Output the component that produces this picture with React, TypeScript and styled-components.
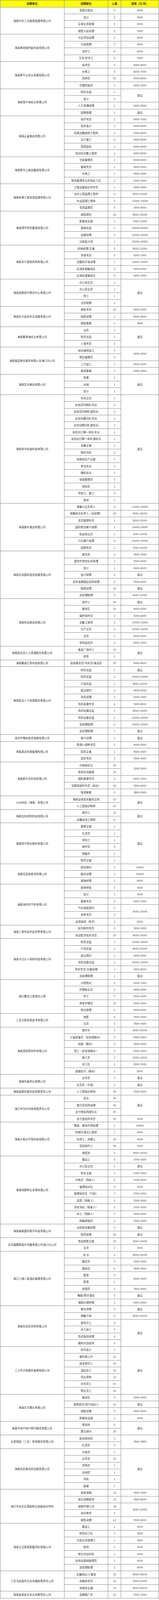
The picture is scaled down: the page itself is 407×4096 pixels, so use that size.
import styled, { createGlobalStyle } from 'styled-components';

type Job = [string, string, string?];

interface Company {
  name: string;
  jobs: Job[];
}

// 薪资为 undefined 表示与上一行合并
const DATA: Company[] = [
  { name: '海南中科三合能源发展有限公司', jobs: [['安装与售后', '3', '6000'], ['会计', '2', '4500'], ['区域业务助理', '5', '5000'], ['销售大区经理', '2', '7000']] },
  { name: '海南希铂瑞热能科技有限公司', jobs: [['大区项目经理', '2', '8000'], ['行政助理', '2', '6000'], ['司炉工', '6', '6000'], ['叉车/铲车工', '5', '5500']] },
  { name: '海南罗牛山农业发展有限公司', jobs: [['技术员', '5', '6000-8500'], ['水电工', '3', '6000-7000'], ['饲养员', '10', '5000-6000'], ['外围防疫员', '1', '4200-5200']] },
  { name: '海南惠中海实业有限公司', jobs: [['财务总监', '1', '面议'], ['会计', '1'], ['人力资源经理', '1', '5000-8000'], ['招聘助理', '1', '面议']] },
  { name: '海南云鲨食品有限公司', jobs: [['安环专员', '1', '4000-7000'], ['成本会计', '1', '4000-8000'], ['机械设备维修工程师', '1', '5000-8000'], ['生产普工', '5', '3000-8000'], ['现场品控', '1', '4000-8000'], ['自动化设备工程师', '1', '5000-8000']] },
  { name: '海南罗牛山食品集团有限公司', jobs: [['仓库管理员', '2', '4000-6000'], ['客服专员', '1', '4000-5500'], ['水电工', '1', '4500-5500'], ['物流管理专业在校实习生', '2', '3000-5000']] },
  { name: '海南睿德工程咨询监理有限公司', jobs: [['工程运营部业务专员', '1', '3000-4000'], ['水利工程监理工程师', '3', '8000-10000'], ['水运监理工程师', '3', '12000-13000'], ['现场监理员', '3', '3000-4000']] },
  { name: '海南博宇财务集团有限公司', jobs: [['销售顾问', '10', '8000-15000'], ['新媒体文案', '1', '7000-10000'], ['营销总监', '1', '20000-40000'], ['运营经理', '1', '10000-15000'], ['注册会计师', '1', '20000-30000']] },
  { name: '海南苏宁易购商贸有限公司', jobs: [['采销经理/主管', '3', '8000-12000'], ['采销专员', '3', '5000-7000'], ['加盟商开发经理', '1', '12000-15000'], ['区域采销管培生', '5', '5000-6000'], ['区域运营管培生', '5', '5000-7000']] },
  { name: '海南金畅现代物流中心有限公司', jobs: [['办公室文员', '1', '面议'], ['办公室主任', '1'], ['电工', '1'], ['法务助理', '1']] },
  { name: '海南东方金农农业发展有限公司', jobs: [['销售专员', '10', '4000-5500'], ['销售经理', '1', '6500-8500'], ['销售客服', '1', '3600']] },
  { name: '海南甄琪海实业有限公司', jobs: [['法务', '1', '面议'], ['财务总监', '1'], ['人事专员', '1']] },
  { name: '海南骏高物业服务有限公司海口分公司', jobs: [['综合维修技工', '3', '3000-4000'], ['物业管理员', '2'], ['三行技工', '1', '3000-5000'], ['案场客服', '1', '3000-4000']] },
  { name: '海南豆冰食品有限公司', jobs: [['库管', '1', '面议'], ['出纳', '1'], ['会计', '1']] },
  {
    name: '海南祥沣包装科技有限公司',
    jobs: [
      ['车间主任', '1', '面议'], ['全自动印刷机 机长', '2'], ['全自动印刷机 副机长', '2'], ['全自动模切机 机长', '1'],
      ['全自动模切机 副机长', '1'], ['全自动订糊一体机 机长', '1'], ['全自动订糊一体机 副机长', '1'], ['设备主管', '1'],
      ['抱车司机', '2'], ['纸板线生产主管', '1'], ['单瓦机长', '2'], ['糊机机长', '1'], ['纸板跟单员', '2'],
      ['质检员', '2'], ['学徒工、普工', '5'], ['厨师', '1'],
    ],
  },
  { name: '海南顺丰速运有限公司', jobs: [['储备片区负责人', '6', '12000-25000'], ['储备网点负责人（店经理）', '20', '9000-16000'], ['关务管理专员', '1', '8000-12000'], ['国际物流客户经理', '1', '10000-20000'], ['陆运收派员', '1', '7000-10000'], ['行业客户经理', '3', '10000-20000'], ['招聘专员', '1', '7000-10000']] },
  { name: '海南天创国际投资发展有限公司', jobs: [['报关员', '2', '3500-7000'], ['国内外物流业务经理', '2', '3000-6000'], ['会计', '1', '4000-6500'], ['会计助理', '2', '面议'], ['会务会展园区招商经理', '5', '3000-6000'], ['销售经理', '10', '面议'], ['总经理助理', '2', '6000-10000']] },
  { name: '海南菲诺食品有限公司', jobs: [['操作工', '45', '面议'], ['管培生', '20', '4000-6000'], ['锅炉操作员', '2', '5000-6000'], ['设备工程师', '2', '10000-12000'], ['生产主任', '2', '10000-12000'], ['文员', '1', '4000-5000'], ['现场品控员', '2', '6000-7000']] },
  { name: '海南职无双人力资源股份有限公司', jobs: [['食品厂操作工', '15', '面议'], ['财务', '1']] },
  { name: '海南鹏诚万李科技有限公司', jobs: [['高铁乘务员/列车员/客运员', '20', '4000-8000']] },
  { name: '海南智洁人力资源股份有限公司', jobs: [['财务总监', '1', '面议'], ['财务总监', '1', '10000-12000'], ['产品总监', '1', '8000-12000'], ['就业顾问', '2', '4000-6000'], ['商务经理', '1', '5000-7000'], ['商务拓展专员', '6', '3000-8000'], ['商务拓展总监', '1', '8000-12000'], ['商务运营总监', '1', '10000-12000'], ['总经理助理', '2', '10000-15000'], ['总经理助理', '1', '面议']] },
  { name: '深圳市橙信投资发展有限公司', jobs: [['客户经理', '1', '面议']] },
  { name: '海南泰龙商城管理有限公司', jobs: [['泰语小语种专员', '1', '4000-4500'], ['招商主管', '1', '4500-5500'], ['招商专员', '2', '3500-4000']] },
  { name: '海南新中北科技有限公司', jobs: [['AI审核标注', '30', '3200-5000'], ['电商在线客服', '20'], ['国际客服专员', '5', '5000-7000'], ['互联网接听专员（综合）', '20', '3500-6000'], ['粤语客服', '5', '3800-5000']] },
  { name: '九州科技（海南）有限公司', jobs: [['海南话语音采集标注师', '10', '面议'], ['人工智能训练师', '10']] },
  { name: '海南住科绿材科技有限公司', jobs: [['操作工', '10', '面议'], ['设备技术工程师', '4']] },
  { name: '海南现代物业服务有限公司', jobs: [['客服主管', '1', '面议'], ['礼宾员', '1'], ['绿化工', '1'], ['维护员', '3'], ['物管员', '1'], ['秩序主管', '1']] },
  { name: '海南百富缘投资有限公司', jobs: [['财务顾问', '2', '10000'], ['副总经理', '1', '20000'], ['营销经理', '2', '8000']] },
  { name: '海南深标特汽车有限公司', jobs: [['钣喷学徒', '2', '3000'], ['会计', '1', '4500'], ['客服专员', '2', '4000-7000'], ['汽车销售顾问', '2', '4000-15000'], ['续保专员', '2'], ['油漆技师（熟手）', '2', '6000']] },
  { name: '海南三恩伴高科技商贸有限公司', jobs: [['标书制作专员', '2', '3000-5000'], ['自动售货机补货员', '10', '8000-10000']] },
  { name: '海南今日达人网络科技有限公司', jobs: [['财务总监', '1', '10000-12000'], ['产品总监', '1', '8000-12000'], ['就业顾问', '1', '3000-6000'], ['商务运营总监', '1', '10000-12000'], ['商务专员/主管经理', '1', '3000-8000'], ['总经理助理', '1', '面议']] },
  { name: '海口椰岛之家老年公寓', jobs: [['分院院长', '2', '5000-7000'], ['护理部主任', '2', '4000-6000'], ['护士', '3', '3000-5000'], ['养老护理员', '10', '3000-5500'], ['院长助理', '2', '4000-6000']] },
  { name: '三亚日新信息技术有限公司', jobs: [['销售', '5', '3500-5000'], ['文员', '2', '3500-4500']] },
  { name: '海南良知新材料有限公司', jobs: [['操作手', '2', '5000-10000'], ['计量库管员（定安或陵水）', '2', '4000-4500'], ['经营（陵水）', '3', '3500-4500'], ['勤工（定安或陵水）', '2', '4500-4500'], ['施工员', '2', '5000-12000'], ['实习生', '1', '3000-3500'], ['装载机手（陵水）', '2', '6000']] },
  { name: '海南东鑫药业有限公司', jobs: [['业务员', '1', '面议'], ['业务员（市县）', '1', '面议']] },
  { name: '海南省数标客科技有限责任公司', jobs: [['人工智能训练师', '50', '2500-4500']] },
  { name: '海口市与众科技有限责任公司', jobs: [['店长', '50', '面议'], ['星巴克招商经理', '50'], ['支付宝招商团队长', '50'], ['支付宝招商专员', '50', '3000']] },
  { name: '海南大胜达环保科技有限公司', jobs: [['餐盒、餐包外贸经理', '1', '10000'], ['机械手调试工程师', '1', '6500'], ['机修工、洗模工', '10', '5500'], ['双班操作工', '30', '5500'], ['销售岗', '3', '3000-10000']] },
  { name: '海南残服再生资源有限公司', jobs: [['搬运工', '5', '2700-5000'], ['办公室主任', '1', '面议'], ['财务主管', '1', '2700-5000'], ['分拣员（残疾人）', '5', '2700-4000'], ['管理培训生', '3', '2500'], ['管理培训生（行政）', '3', '2700-5000'], ['后厨（残疾人）', '3', '2500-4000'], ['货车司机（残疾人）', '2', '2700-5000'], ['木工（残疾人）', '2', '2500-5000'], ['种植养殖员', '2', '2500-5000']] },
  { name: '海南鑫都国际数字科技有限公司', jobs: [['ip拍剪运营经理', '2', '面议'], ['招商经理', '40', '面议']] },
  { name: '北京福覃联医疗设备有限公司海口分公司', jobs: [['电话销售主管', '10', '3000-10000'], ['文员', '2', '3000']] },
  { name: '海口三湘人家酒店管理有限公司', jobs: [['店 长', '1', '8000-10000'], ['服务员', '5', '3100-4000'], ['管培生', '5', '3500-4500'], ['配菜', '2', '4000-5000'], ['配菜', '2'], ['收银员', '2', '3500-4500'], ['舞蹈/歌手演员', '2', '面议'], ['湘菜炒锅师傅', '2', '5000-6000']] },
  { name: '海南旺佳旺商贸有限公司', jobs: [['餐饮师傅', '5', '面议'], ['储备干部', '5', '4000-10000'], ['面包中工', '6', '面议'], ['水工技工', '5'], ['西式面包师傅', '5'], ['猪肉分割技师', '5']] },
  { name: '三沙市天勤服务管理有限公司', jobs: [['财务会计', '1', '面议'], ['餐饮类工作', '10'], ['技术类员工', '10'], ['酒店员工', '10'], ['商业导购', '10'], ['水务员工', '10'], ['物业员工', '10']] },
  { name: '海南左邻置业有限公司', jobs: [['管培生', '5', '3000-5000'], ['销售顾问/房产经纪人', '10', '面议'], ['销售经理', '2', '4000-8000'], ['新媒体运营', '1', '4000']] },
  { name: '海南中地行地产顾问服务有限公司', jobs: [['策划师', '2', '面议'], ['置业顾问', '20']] },
  { name: '太保家园（三亚）养老服务有限公司', jobs: [['前台接待员', '2', '3500-3800'], ['礼宾员', '2']] },
  { name: '海南优民食品供应链有限公司', jobs: [['分拣员', '1', '面议'], ['业务员', '10'], ['采购员', '1'], ['出纳员', '1'], ['司机', '1'], ['客服', '1']] },
  { name: '海口市龙华区德裕职业技能培训学校', jobs: [['家政保姆', '15', '3500-7000'], ['就业招聘老师', '12', '3500-8000'], ['母婴护理人员', '18', '5000-10000'], ['培训老师', '5'], ['销售经理', '12', '3500-8000']] },
  { name: '海南立泛家居配套材料有限公司', jobs: [['搬运工', '1', '3500'], ['财务实习生', '1', '2800'], ['仓库点货清理工', '1', '2800'], ['厨师', '1', '3000'], ['单位货运司机', '1', '3500'], ['实体店营销管理员', '1', '4000'], ['总经理助理', '1', '8000']] },
  { name: '三亚洋启智传文化传播有限责任公司', jobs: [['主播经纪人/星探', '10', '8000-50000'], ['自媒体学员', '20', '5000-20000'], ['自媒体主播', '10', '8000-30000']] },
  { name: '海南省惠宜生实业有限责任公司', jobs: [['品牌推广员', '10', '3000-7000']] },
];

const HEADERS = ['招聘单位', '招聘职位', '人数', '薪资（元/月）'];

const TOTAL_ROWS = DATA.reduce((sum, c) => sum + c.jobs.length, 0);

const GlobalStyle = createGlobalStyle`
  html, body {
    margin: 0;
    padding: 0;
    background: #ffffff;
  }
  body {
    font-family: "Noto Sans CJK SC", "Noto Sans", sans-serif;
  }
`;

const Sheet = styled.div<{ $rows: number }>`
  display: grid;
  grid-template-columns: 162.6px 111.6px 32.1px 1fr;
  grid-template-rows: 16.66px repeat(${({ $rows }) => $rows}, 16.41px);
  gap: 1px;
  padding: 1px;
  width: 407px;
  box-sizing: border-box;
  background: #8c8c8c;
  font-family: "Noto Sans CJK SC", "Noto Sans", sans-serif;
  font-size: 6.9px;
  color: #3c3c3c;
`;

const Cell = styled.div.attrs<{ $col: number; $row: number; $span?: number }>(({ $col, $row, $span = 1 }) => ({
  style: { gridColumn: $col, gridRow: `${$row} / span ${$span}` },
}))<{ $col: number; $row: number; $span?: number }>`
  display: flex;
  align-items: center;
  justify-content: center;
  background: #ffffff;
  white-space: nowrap;
  overflow: hidden;
  line-height: 1;
  text-align: center;
`;

const HeadCell = styled(Cell)`
  background: #ffff00;
  color: #1e1e1e;
  font-weight: 700;
`;

function buildCells() {
  const cells: JSX.Element[] = [];
  let row = 2;
  DATA.forEach((company, ci) => {
    const start = row;
    const n = company.jobs.length;
    cells.push(
      <Cell key={`c${ci}`} $col={1} $row={start} $span={n}>
        {company.name}
      </Cell>,
    );
    company.jobs.forEach(([title, count, salary], ji) => {
      const r = start + ji;
      cells.push(
        <Cell key={`t${ci}-${ji}`} $col={2} $row={r}>
          {title}
        </Cell>,
        <Cell key={`n${ci}-${ji}`} $col={3} $row={r}>
          {count}
        </Cell>,
      );
      if (salary !== undefined) {
        let span = 1;
        while (ji + span < n && company.jobs[ji + span][2] === undefined) span++;
        cells.push(
          <Cell key={`s${ci}-${ji}`} $col={4} $row={r} $span={span}>
            {salary}
          </Cell>,
        );
      }
    });
    row += n;
  });
  return cells;
}

function App() {
  return (
    <>
      <GlobalStyle />
      <Sheet $rows={TOTAL_ROWS}>
        {HEADERS.map((h, i) => (
          <HeadCell key={h} $col={i + 1} $row={1}>
            {h}
          </HeadCell>
        ))}
        {buildCells()}
      </Sheet>
    </>
  );
}

export default App;
